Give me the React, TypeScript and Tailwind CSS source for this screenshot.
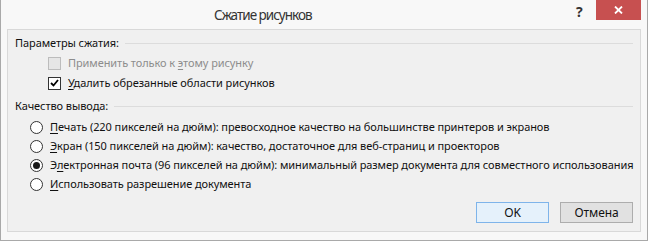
import React from 'react';

const Mn: React.FC<{ children: React.ReactNode }> = ({ children }) => (
  <span className="underline underline-offset-[2px] decoration-[1px]">{children}</span>
);

const Checkbox: React.FC<{ checked?: boolean; disabled?: boolean }> = ({ checked, disabled }) => (
  <span
    className={
      'w-[13px] h-[13px] border flex items-center justify-center shrink-0 ' +
      (disabled ? 'border-[#bcbcbc] bg-[#e6e6e6]' : 'border-[#333333] bg-white')
    }
  >
    {checked && (
      <svg width="9" height="8" viewBox="0 0 9 8">
        <path d="M1 4 L3.5 6.5 L8 1" fill="none" stroke="#000" strokeWidth="1.8" />
      </svg>
    )}
  </span>
);

const Radio: React.FC<{ checked?: boolean }> = ({ checked }) => (
  <span className="w-[13px] h-[13px] rounded-full border border-[#333333] bg-white flex items-center justify-center shrink-0">
    {checked && <span className="w-[7px] h-[7px] rounded-full bg-[#1a1a1a]" />}
  </span>
);

const SectionHeader: React.FC<{ label: string }> = ({ label }) => (
  <div className="h-[20px] flex items-center gap-[6px]">
    <span>{label}</span>
    <div className="flex-1 h-px bg-[#dcdcdc]" />
  </div>
);

const qualities: { pre: string; key: string; rest: string; checked?: boolean }[] = [
  { pre: '', key: 'П', rest: 'ечать (220 пикселей на дюйм): превосходное качество на большинстве принтеров и экранов' },
  { pre: '', key: 'Э', rest: 'кран (150 пикселей на дюйм): качество, достаточное для веб-страниц и проекторов' },
  {
    pre: 'Э',
    key: 'л',
    rest: 'ектронная почта (96 пикселей на дюйм): минимальный размер документа для совместного использования',
    checked: true,
  },
  { pre: '', key: 'И', rest: 'спользовать разрешение документа' },
];

export default function App() {
  return (
    <div
      className="w-[648px] h-[241px] bg-[#f8f8f8] border-x border-b border-[#a9a9a9] flex flex-col text-[11px] tracking-[-0.08px] text-[#111111]"
      style={{ fontFamily: '"Noto Sans", "Open Sans", sans-serif' }}
    >
      <div className="h-[29px] flex items-start shrink-0">
        <div className="flex-1 pl-[213px] pt-[6px] text-[13.5px] tracking-[-1px] text-[#333333] leading-[18px]">
          Сжатие рисунков
        </div>
        <div className="w-[20px] pt-[4px] text-[14px] font-bold text-[#333] leading-[16px]">?</div>
        <div className="w-[45px] h-[20px] bg-[#c75050] flex items-center justify-center mr-[6px]">
          <svg width="9" height="8" viewBox="0 0 9 8">
            <path d="M1 0.5 L8 7.5 M8 0.5 L1 7.5" stroke="#fff" strokeWidth="1.8" />
          </svg>
        </div>
      </div>

      <div className="mx-[6px] h-[203px] border border-[#d9d9d9] bg-[#f0f0f0] px-[7px] pt-[3px] flex flex-col">
        <SectionHeader label="Параметры сжатия:" />
        <div className="pl-[33px]">
          <div className="h-[20px] flex items-center gap-[7px] text-[#8d8d8d]">
            <Checkbox disabled />
            <span>
              Применить только к <Mn>э</Mn>тому рисунку
            </span>
          </div>
          <div className="h-[20px] flex items-center gap-[7px]">
            <Checkbox checked />
            <span>
              <Mn>У</Mn>далить обрезанные области рисунков
            </span>
          </div>
        </div>

        <div className="mt-[3px]">
          <SectionHeader label="Качество вывода:" />
        </div>
        <div className="pl-[15px] mt-[2px]">
          {qualities.map((q, i) => (
            <div key={i} className="h-[19px] flex items-center gap-[7px] whitespace-nowrap">
              <Radio checked={q.checked} />
              <span>
                {q.pre}
                <Mn>{q.key}</Mn>
                {q.rest}
              </span>
            </div>
          ))}
        </div>

        <div className="flex justify-end gap-[11px] mt-[8px]">
          <button className="w-[73px] h-[21px] border border-[#7eb4ea] bg-[#e5f1fb] text-[12px] leading-none">
            OK
          </button>
          <button className="w-[73px] h-[21px] border border-[#adadad] bg-[#e1e1e1] text-[12px] leading-none">
            Отмена
          </button>
        </div>
      </div>
    </div>
  );
}
